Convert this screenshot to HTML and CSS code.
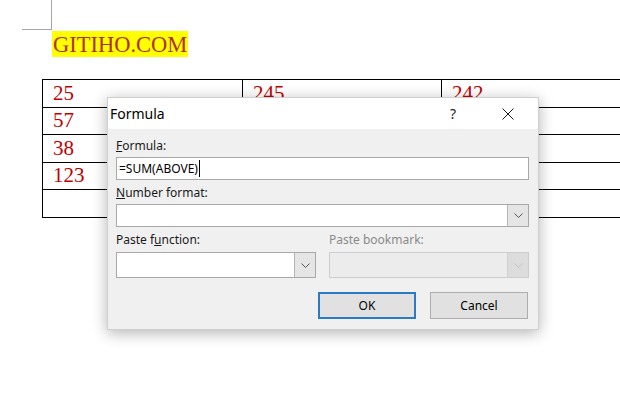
FILE: index.html
```html
<!DOCTYPE html>
<html lang="vi">
<head>
    <meta charset="UTF-8">
    <meta name="viewport" content="width=device-width, initial-scale=1.0">
    <title>Formula</title>
    <link rel="stylesheet" href="styles.css">
</head>
<body>
    <div class="page">
        <div class="corner-mark"></div>
        <p class="doc-title"><span class="highlight">GITIHO.COM</span></p>

        <table class="doc-table">
            <tr><td>25</td><td>245</td><td>242</td></tr>
            <tr><td>57</td><td></td><td></td></tr>
            <tr><td>38</td><td></td><td></td></tr>
            <tr><td>123</td><td></td><td></td></tr>
            <tr><td></td><td></td><td></td></tr>
        </table>

        <!-- Formula dialog -->
        <div class="dialog">
            <div class="dialog-titlebar">
                <span class="dialog-title">Formula</span>
                <span class="help">?</span>
                <svg class="close" width="12" height="12" viewBox="0 0 12 12">
                    <path d="M0.5 0.5L11.5 11.5M11.5 0.5L0.5 11.5" stroke="#1a1a1a" stroke-width="1"/>
                </svg>
            </div>
            <div class="dialog-body">
                <label class="field-label"><u>F</u>ormula:</label>
                <div class="text-input"><span class="caret">=SUM(ABOVE)</span></div>

                <label class="field-label"><u>N</u>umber format:</label>
                <div class="select">
                    <span class="select-btn">
                        <svg width="9" height="5" viewBox="0 0 9 5"><path d="M0.5 0.5L4.5 4.5L8.5 0.5" fill="none" stroke="#555" stroke-width="1"/></svg>
                    </span>
                </div>

                <div class="two-cols">
                    <div>
                        <label class="field-label">Paste f<u>u</u>nction:</label>
                        <div class="select tall">
                            <span class="select-btn">
                                <svg width="9" height="5" viewBox="0 0 9 5"><path d="M0.5 0.5L4.5 4.5L8.5 0.5" fill="none" stroke="#555" stroke-width="1"/></svg>
                            </span>
                        </div>
                    </div>
                    <div>
                        <label class="field-label disabled">Paste bookmark:</label>
                        <div class="select tall is-disabled">
                            <span class="select-btn">
                                <svg width="9" height="5" viewBox="0 0 9 5"><path d="M0.5 0.5L4.5 4.5L8.5 0.5" fill="none" stroke="#c4c4c4" stroke-width="1"/></svg>
                            </span>
                        </div>
                    </div>
                </div>

                <div class="dialog-buttons">
                    <button class="btn btn-default">OK</button>
                    <button class="btn">Cancel</button>
                </div>
            </div>
        </div>
    </div>
</body>
</html>
```

FILE: styles.css
```css
* {
    margin: 0;
    padding: 0;
    box-sizing: border-box;
}

body {
    background: white;
    font-family: 'Noto Sans', sans-serif;
    width: 620px;
    height: 410px;
    overflow: hidden;
}

.page {
    position: relative;
    height: 410px;
}

.corner-mark {
    width: 30px;
    height: 30px;
    margin-left: 22px;
    border-right: 1px solid #a6a6a6;
    border-bottom: 1px solid #a6a6a6;
}

.doc-title {
    margin-top: 1px;
    margin-left: 52px;
    height: 26px;
}

.highlight {
    display: inline-block;
    height: 26px;
    line-height: 28px;
    padding: 0 1px;
    background: #ffff00;
    color: #b0301c;
    font-family: 'Liberation Serif', serif;
    font-size: 22.5px;
}

.doc-table {
    margin-top: 22px;
    margin-left: 42px;
    width: 600px;
    border-collapse: collapse;
    table-layout: fixed;
}

.doc-table td {
    height: 27.5px;
    border: 1px solid #000;
    padding: 0 10px 2px;
    vertical-align: bottom;
    color: #c00000;
    font-family: 'Liberation Serif', serif;
    font-size: 21px;
    line-height: 24px;
}

.doc-table td:nth-child(1) { width: 200px; }
.doc-table td:nth-child(2) { width: 199px; }

/* Dialog */
.dialog {
    position: absolute;
    left: 107px;
    top: 97px;
    width: 432px;
    height: 233px;
    background: #f0f0f0;
    border: 1px solid #cfcfcf;
    box-shadow: 0 3px 14px rgba(0, 0, 0, 0.3);
}

.dialog-titlebar {
    height: 31px;
    background: white;
    display: flex;
    align-items: center;
    padding-left: 2px;
}

.dialog-title {
    font-size: 14px;
    color: #000;
    flex: 1;
}

.help {
    font-size: 14px;
    color: #1a1a1a;
    margin-right: 46px;
}

.close {
    margin-right: 24px;
}

.dialog-body {
    padding: 9px 9px 0 8px;
}

.field-label {
    display: block;
    font-size: 12px;
    line-height: 16px;
    color: #1a1a1a;
    margin-bottom: 3px;
}

.two-cols .field-label {
    margin-bottom: 4px;
}

.field-label.disabled {
    color: #8a8a8a;
}

.text-input {
    height: 23px;
    background: white;
    border: 1px solid #a8a8a8;
    padding-left: 2px;
    font-size: 12px;
    line-height: 21px;
    margin-bottom: 5px;
}

.caret {
    border-right: 1px solid #000;
    padding-right: 1px;
}

.select {
    height: 23px;
    background: white;
    border: 1px solid #a8a8a8;
    display: flex;
    justify-content: flex-end;
    margin-bottom: 5px;
}

.select.tall {
    height: 26px;
    margin-bottom: 0;
}

.select-btn {
    width: 21px;
    background: #e5e5e5;
    border-left: 1px solid #b5b5b5;
    display: flex;
    align-items: center;
    justify-content: center;
}

.select.is-disabled {
    background: #ececec;
    border-color: #cccccc;
}

.select.is-disabled .select-btn {
    background: #dcdcdc;
    border-left-color: #d0d0d0;
}

.two-cols {
    display: grid;
    grid-template-columns: 200px 200px;
    gap: 13px;
}

.dialog-buttons {
    display: flex;
    justify-content: flex-end;
    gap: 14px;
    margin-top: 14px;
    padding-right: 1px;
}

.btn {
    width: 98px;
    height: 27px;
    background: #e1e1e1;
    border: 1px solid #adadad;
    font-family: 'Noto Sans', sans-serif;
    font-size: 12px;
    color: #000;
}

.btn-default {
    border: 2px solid #2b7bc4;
}
```
